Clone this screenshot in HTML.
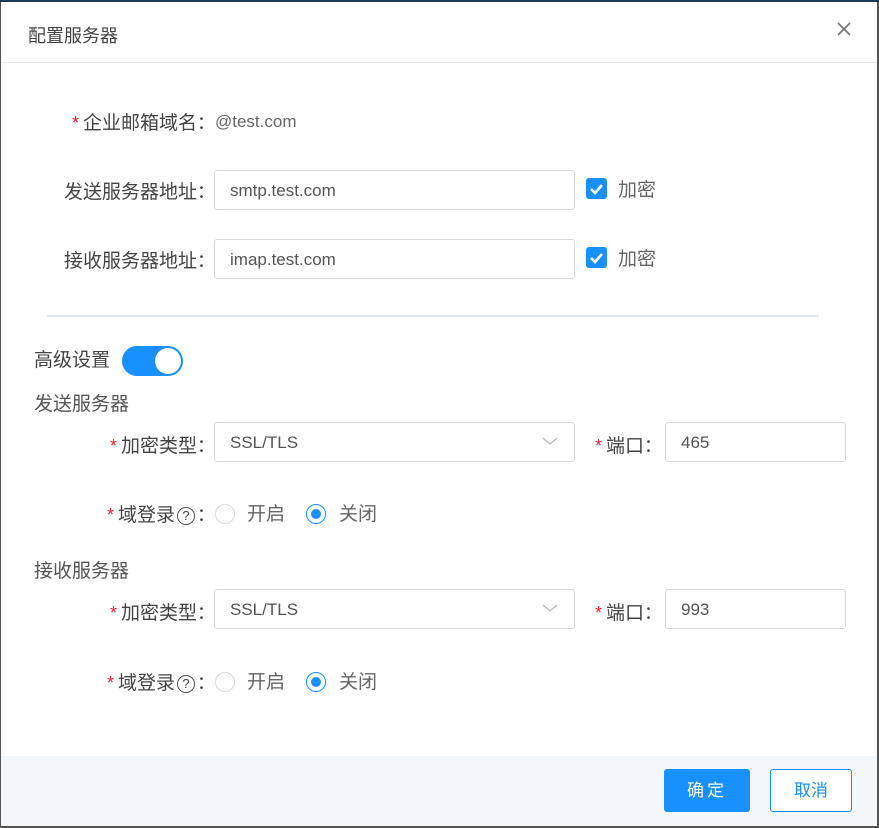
<!DOCTYPE html>
<html><head><meta charset="utf-8"><style>
*{box-sizing:border-box;margin:0;padding:0}
body{width:879px;height:828px;background:#555;font-family:"Liberation Sans","Noto Sans CJK SC",sans-serif;position:relative;overflow:hidden}
.dlg{position:absolute;left:1px;top:2px;width:876px;height:824px;background:#fff}
.topb{position:absolute;left:0;top:0;width:879px;height:2px;background:#1d3a5c}
.a{position:absolute;white-space:nowrap}
.lbl{font-size:19px;color:#444;line-height:22px;transform:translateY(2px)}
.r{position:absolute;left:0;width:212px;text-align:right;white-space:nowrap;font-size:19px;color:#444;line-height:22px;transform:translateY(1px)}
.c{font-family:"Noto Sans CJK SC",sans-serif;font-size:18px;margin-right:-2px}
.req{color:#f5222d;margin-right:4px;font-size:18px}
.inp{position:absolute;border:1px solid #d9d9d9;border-radius:3px;height:40px;padding-left:15px;line-height:40px;font-size:17px;color:#555;background:#fff}
.cb{position:absolute;width:21px;height:21px;background:#1890ff;border-radius:3px}
.radio{position:absolute;width:20px;height:20px;border:1px solid #d9d9d9;border-radius:50%}
.radio.on{border-color:#1890ff}
.radio.on::after{content:"";position:absolute;left:4px;top:4px;width:10px;height:10px;border-radius:50%;background:#1890ff}
.q{display:inline-block;width:18px;height:18px;border:1.5px solid #555;border-radius:50%;font-size:13px;line-height:15px;text-align:center;vertical-align:1px;margin:0 2px}
</style></head><body>
<div class="topb"></div>
<div class="dlg">
<div class="a" style="left:27px;top:20px;font-size:18px;color:#444">配置服务器</div>
<svg class="a" style="left:835px;top:19px" width="16" height="16"><path d="M2 2L14 14M14 2L2 14" stroke="#777" stroke-width="1.8"/></svg>
<div class="a" style="left:0;top:60px;width:876px;height:1px;background:#e4e9ee"></div>

<div class="r" style="top:108px"><span class="req">*</span>企业邮箱域名<span class="c">：</span></div>
<div class="a lbl" style="left:214px;top:107px;color:#666;font-size:17px">@test.com</div>
<div class="r" style="top:177px">发送服务器地址<span class="c">：</span></div>
<div class="inp" style="left:213px;top:168px;width:361px">smtp.test.com</div>
<div class="cb" style="left:585px;top:176px"></div>
<svg class="a" style="left:585px;top:176px" width="21" height="21"><path d="M5 11L9 15L16 7" stroke="#fff" stroke-width="2.6" fill="none"/></svg>
<div class="a lbl" style="left:617px;top:176px;color:#666">加密</div>
<div class="r" style="top:246px">接收服务器地址<span class="c">：</span></div>
<div class="inp" style="left:213px;top:237px;width:361px">imap.test.com</div>
<div class="cb" style="left:585px;top:245px"></div>
<svg class="a" style="left:585px;top:245px" width="21" height="21"><path d="M5 11L9 15L16 7" stroke="#fff" stroke-width="2.6" fill="none"/></svg>
<div class="a lbl" style="left:617px;top:245px;color:#666">加密</div>
<div class="a" style="left:46px;top:313px;width:772px;height:2px;background:#e1e9f0"></div>

<div class="a lbl" style="left:33px;top:346px">高级设置</div>
<div class="a" style="left:121px;top:344px;width:61px;height:30px;border-radius:15px;background:#1890ff"></div>
<div class="a" style="left:154px;top:346px;width:26px;height:26px;border-radius:50%;background:#fff"></div>
<div class="a lbl" style="left:33px;top:390px;color:#555">发送服务器</div>

<div class="r" style="top:431px"><span class="req">*</span>加密类型<span class="c">：</span></div>
<div class="inp" style="left:213px;top:420px;width:361px">SSL/TLS</div>
<svg class="a" style="left:541px;top:434px" width="16" height="10"><path d="M1 2L8 8L15 2" stroke="#bbb" stroke-width="1.4" fill="none"/></svg>
<div class="a lbl" style="left:594px;top:430px"><span class="req">*</span>端口<span class="c">：</span></div>
<div class="inp" style="left:664px;top:420px;width:181px">465</div>
<div class="r" style="top:500px"><span class="req">*</span>域登录<span class="q">?</span><span class="c">：</span></div>
<div class="radio" style="left:214px;top:502px"></div>
<div class="a lbl" style="left:246px;top:500px;color:#666">开启</div>
<div class="radio on" style="left:305px;top:502px"></div>
<div class="a lbl" style="left:338px;top:500px;color:#666">关闭</div>

<div class="a lbl" style="left:33px;top:557px;color:#555">接收服务器</div>
<div class="r" style="top:598px"><span class="req">*</span>加密类型<span class="c">：</span></div>
<div class="inp" style="left:213px;top:587px;width:361px">SSL/TLS</div>
<svg class="a" style="left:541px;top:601px" width="16" height="10"><path d="M1 2L8 8L15 2" stroke="#bbb" stroke-width="1.4" fill="none"/></svg>
<div class="a lbl" style="left:594px;top:597px"><span class="req">*</span>端口<span class="c">：</span></div>
<div class="inp" style="left:664px;top:587px;width:181px">993</div>
<div class="r" style="top:668px"><span class="req">*</span>域登录<span class="q">?</span><span class="c">：</span></div>
<div class="radio" style="left:214px;top:670px"></div>
<div class="a lbl" style="left:246px;top:668px;color:#666">开启</div>
<div class="radio on" style="left:305px;top:670px"></div>
<div class="a lbl" style="left:338px;top:668px;color:#666">关闭</div>

<div class="a" style="left:0;top:754px;width:876px;height:70px;background:#f4f7fa"></div>
<div class="a" style="left:663px;top:767px;width:86px;height:43px;background:#1890ff;border-radius:3px;color:#fff;font-size:17px;text-align:center;line-height:43px;letter-spacing:3px">确定</div>
<div class="a" style="left:769px;top:767px;width:82px;height:43px;background:#fff;border:1px solid #1890ff;border-radius:3px;color:#1890ff;font-size:17px;text-align:center;line-height:41px">取消</div>
</div>
</body></html>
